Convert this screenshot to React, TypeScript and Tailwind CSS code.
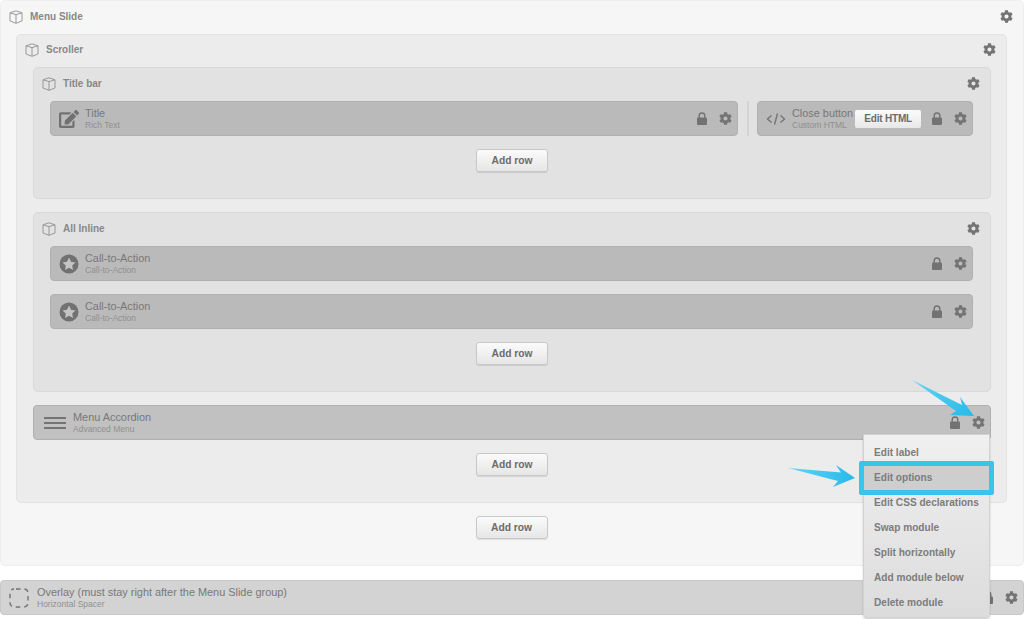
import { ReactNode } from 'react';
import { FaCog, FaEdit } from 'react-icons/fa';

function CubeIcon() {
  return (
    <svg width="14" height="14" viewBox="0 0 14 14" fill="none" stroke="#909090" strokeWidth="0.9" strokeLinejoin="round" className="shrink-0">
      <path d="M7 .8 13 2.8V11L7 13.3 1 11V2.8Z" />
      <path d="M1 2.8 7 4.6 13 2.8M7 4.6V13.3" />
    </svg>
  );
}

function CtaIcon() {
  return (
    <svg width="20" height="20" viewBox="0 0 20 20" className="shrink-0">
      <circle cx="10" cy="10" r="9.5" fill="#717171" />
      <path d="M10 3.6 12 7.8 16.5 8.4 13.2 11.5 14 16 10 13.8 6 16 6.8 11.5 3.5 8.4 8 7.8Z" fill="#c4c4c4" />
    </svg>
  );
}

function CodeIcon() {
  return (
    <svg width="20" height="14" viewBox="0 0 20 14" fill="none" stroke="#757575" strokeWidth="1.4" className="shrink-0">
      <path d="M5.5 3.5 1.5 7 5.5 10.5M14.5 3.5 18.5 7 14.5 10.5M11.5 1.5 8.5 12.5" />
    </svg>
  );
}

function BarsIcon() {
  return (
    <svg width="22" height="14" viewBox="0 0 22 14" fill="#747474" className="shrink-0">
      <rect y="1" width="22" height="2" />
      <rect y="6" width="22" height="2" />
      <rect y="11" width="22" height="2" />
    </svg>
  );
}

function SpacerIcon() {
  return (
    <svg width="20" height="20" viewBox="0 0 20 20" fill="none" stroke="#747474" strokeWidth="1.4" className="shrink-0">
      <rect x="1" y="1" width="18" height="18" rx="4" strokeDasharray="4.5 4" strokeDashoffset="-2" />
    </svg>
  );
}

function LockIcon() {
  return (
    <svg width="10" height="13" viewBox="0 0 10 13" className="shrink-0">
      <path d="M2.2 6V3.8a2.8 2.8 0 0 1 5.6 0V6" fill="none" stroke="#727272" strokeWidth="1.4" />
      <rect x="0" y="5.5" width="10" height="7.5" rx="1" fill="#727272" />
    </svg>
  );
}

function Gear() {
  return <FaCog className="w-[13px] h-[13px] text-[#747474] shrink-0" />;
}

function AddRow() {
  return (
    <button className="w-[72px] h-[23px] rounded-[3px] border border-[#c8c8c8] bg-gradient-to-b from-[#fbfbfb] to-[#e6e6e6] text-[10.25px] font-bold text-[#6c6c6c] shadow-[0_1px_1px_rgba(0,0,0,0.1)]">
      Add row
    </button>
  );
}

function Group({
  title,
  className,
  headerClass,
  children,
}: {
  title: string;
  className: string;
  headerClass: string;
  children: ReactNode;
}) {
  return (
    <div className={`rounded-[5px] border flex flex-col ${className}`}>
      <div className={`shrink-0 flex items-center justify-between pl-[8px] pr-[10px] ${headerClass}`}>
        <div className="flex items-center gap-[7px]">
          <CubeIcon />
          <span className="text-[10px] font-bold text-[#888888]">{title}</span>
        </div>
        <Gear />
      </div>
      {children}
    </div>
  );
}

function Module({
  title,
  sub,
  icon,
  className,
  extra,
}: {
  title: string;
  sub: string;
  icon: ReactNode;
  className: string;
  extra?: ReactNode;
}) {
  return (
    <div className={`h-[35px] rounded-[4px] border border-[#b0b0b0] flex items-center pr-[5px] ${className}`}>
      {icon}
      <div className="flex flex-col whitespace-nowrap pt-[1px]">
        <span className="text-[10.9px] leading-[13px] text-[#787878]">{title}</span>
        <span className="text-[8.5px] leading-[11px] text-[#909090]">{sub}</span>
      </div>
      {extra}
      <div className="ml-auto flex items-center gap-[12px]">
        <LockIcon />
        <Gear />
      </div>
    </div>
  );
}

const menuItems = ['Edit label', 'Edit options', 'Edit CSS declarations', 'Swap module', 'Split horizontally', 'Add module below', 'Delete module'];

function ContextMenu() {
  return (
    <div className="absolute left-[863px] top-[434px] w-[127px] h-[184px] pt-[5px] rounded-b-[3px] border border-[#d2d2d2] bg-gradient-to-b from-[#f0f0f0] to-[#dcdcdc] shadow-[0_1px_2px_rgba(0,0,0,0.2)]">
      {menuItems.map((item) => (
        <div key={item} className="relative h-[25px] flex items-center px-[10px] text-[10.1px] font-bold text-[#7c7c7c] whitespace-nowrap">
          {item === 'Edit options' && (
            <div className="absolute -left-[5px] -right-[5px] -top-[4px] -bottom-[5px] border-[5px] border-[#38c4ef] rounded-[2px] bg-[#cecece]" />
          )}
          <span className="relative">{item}</span>
        </div>
      ))}
    </div>
  );
}

function Arrows() {
  return (
    <svg width="1024" height="619" viewBox="0 0 1024 619" className="absolute left-0 top-0 pointer-events-none">
      <defs>
        <linearGradient id="arrowA" x1="0" y1="0" x2="1" y2="1">
          <stop offset="0" stopColor="#63d5f5" />
          <stop offset="1" stopColor="#27b9ea" />
        </linearGradient>
        <linearGradient id="arrowB" x1="0" y1="0" x2="1" y2="0">
          <stop offset="0" stopColor="#63d5f5" />
          <stop offset="1" stopColor="#27b9ea" />
        </linearGradient>
      </defs>
      <path d="M912 380 962 405 960 397 974 416 950 415 956 411Z" fill="url(#arrowA)" />
      <path d="M788 468 841 472.5 836 465 855 478 833 487 838 481Z" fill="url(#arrowB)" />
    </svg>
  );
}

export default function App() {
  return (
    <div className="relative w-[1024px] h-[619px] overflow-hidden bg-white font-['Liberation_Sans',Arial,sans-serif]">
      <Group title="Menu Slide" headerClass="h-[33px] pb-[2px]" className="h-[566px] bg-[#f6f6f6] border-[#eeeeee]">
        <div className="pl-[15px] pr-[16px]">
          <Group title="Scroller" headerClass="h-[32px] pb-[3px]" className="h-[469px] bg-[#ececec] border-[#e2e2e2]">
            <div className="pl-[16px] pr-[15px] flex flex-col">
              <Group title="Title bar" headerClass="h-[33px] pb-[2px]" className="h-[132px] bg-[#e2e2e2] border-[#d8d8d8]">
                <div className="pl-[16px] pr-[16px] flex items-center">
                  <Module
                    title="Title"
                    sub="Rich Text"
                    className="w-[688px] bg-[#bababa] pl-[8px] gap-[6px]"
                    icon={<FaEdit className="w-[20px] h-[18px] text-[#717171] shrink-0" />}
                  />
                  <div className="w-[2px] h-[35px] bg-[#d4d4d4] ml-[9px] mr-[8px]" />
                  <Module
                    title="Close button"
                    sub="Custom HTML"
                    className="w-[216px] bg-[#bababa] pl-[8px] gap-[6px]"
                    icon={<CodeIcon />}
                    extra={
                      <button className="ml-[-4px] w-[66px] h-[18px] shrink-0 rounded-[2px] bg-gradient-to-b from-[#fbfbfb] to-[#e8e8e8] text-[10px] tracking-[-0.2px] font-bold text-[#6c6c6c]">
                        Edit HTML
                      </button>
                    }
                  />
                </div>
                <div className="mt-[13px] flex justify-center">
                  <AddRow />
                </div>
              </Group>
              <div className="h-[13px]" />
              <Group title="All Inline" headerClass="h-[33px] pb-[2px]" className="h-[180px] bg-[#e2e2e2] border-[#d8d8d8]">
                <div className="pl-[16px] pr-[17px] flex flex-col gap-[13px]">
                  <Module title="Call-to-Action" sub="Call-to-Action" className="bg-[#bababa] pl-[8px] gap-[6px]" icon={<CtaIcon />} />
                  <Module title="Call-to-Action" sub="Call-to-Action" className="bg-[#bababa] pl-[8px] gap-[6px]" icon={<CtaIcon />} />
                </div>
                <div className="mt-[13px] flex justify-center">
                  <AddRow />
                </div>
              </Group>
              <div className="h-[13px]" />
              <Module title="Menu Accordion" sub="Advanced Menu" className="bg-[#c1c1c1] pl-[10px] gap-[7px]" icon={<BarsIcon />} />
              <div className="mt-[13px] flex justify-center">
                <AddRow />
              </div>
            </div>
          </Group>
          <div className="mt-[13px] flex justify-center">
            <AddRow />
          </div>
        </div>
      </Group>
      <div className="mt-[14px]">
        <Module
          title="Overlay (must stay right after the Menu Slide group)"
          sub="Horizontal Spacer"
          className="bg-[#d3d3d3] border-[#c8c8c8] pl-[8px] gap-[8px]"
          icon={<SpacerIcon />}
        />
      </div>
      <ContextMenu />
      <Arrows />
    </div>
  );
}
